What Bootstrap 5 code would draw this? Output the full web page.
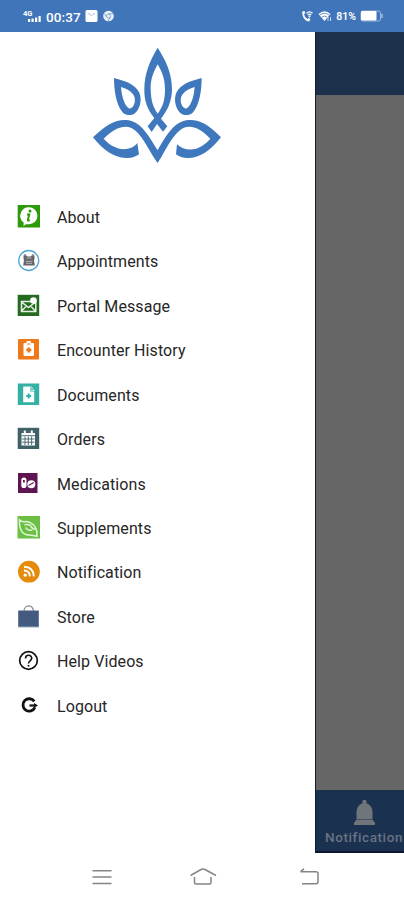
<!DOCTYPE html>
<html lang="en">
<head>
<meta charset="utf-8">
<meta name="viewport" content="width=device-width, initial-scale=1">
<title>Patient portal menu</title>
<link href="https://cdn.jsdelivr.net/npm/bootstrap@5.3.0/dist/css/bootstrap.min.css" rel="stylesheet">
<style>
body{font-family:Roboto,"Liberation Sans",sans-serif;background:#fff;overflow:hidden}
.phone{width:404px;height:900px}
.status{height:32px;background:#4175b9;color:#fff;padding:0 21px 0 23px}
.clock{font-size:13.5px;font-weight:500;letter-spacing:.1px;line-height:32px;margin-left:3px;padding-top:1px}
.batt{font-size:10.5px;font-weight:600;line-height:32px;padding-top:1px;margin-left:4px}
.stage{height:821px}
.drawer{width:315px;padding-top:8px}
.emblem{margin-left:84px;height:130px}
.menu{margin-top:24.8px}
.menu a{height:44.43px;padding-left:17px;color:#262626;font-size:16px;letter-spacing:.09px;line-height:20px}
.menu a span{padding-top:2px}
.menu svg{width:24px;height:24px;margin-right:16px;overflow:visible}
.behind{background:#666;border-left:1px solid #101c30}
.topbar{height:63px;background:#1c304b}
.tab{height:63px;background:#1b3150;color:#697382;border-bottom:2px solid #0b1730}
.tab span{font-size:13.5px;letter-spacing:.6px;line-height:16px;font-weight:500;margin:auto 0 6px 9px;white-space:nowrap}
.tab svg{margin:9px 0 0 36px}
.sysnav{height:47px}
</style>
</head>
<body>
<div class="phone d-flex flex-column overflow-hidden">
  <header class="status d-flex align-items-center justify-content-between">
    <div class="d-flex align-items-center">
      <svg width="20" height="14" viewBox="0 0 20 14" fill="#fff"><text x="0" y="7" font-size="7.500" font-weight="700">4G</text><path d="M5 10h2.200v3H5zM8.500 9.500h2.200V13H8.500zM12 8.500h2.200V13H12zM15.500 7h2.200v6h-2.200z"/></svg>
      <span class="clock">00:37</span>
      <svg class="ms-1" width="13" height="12" viewBox="0 0 13 12"><rect x=".5" width="12" height="12" rx="1.500" fill="#fff"/><path d="M3 3l3.500 2.500L10 3" fill="none" stroke="#a8c0df"/></svg>
      <svg class="ms-1" width="12" height="12" viewBox="0 0 12 12"><circle cx="6.500" cy="6" r="5.300" fill="#e9f0f8"/><circle cx="6.500" cy="6" r="2" fill="none" stroke="#8eaed6"/><path d="M6.500 3.800h4.500M4.500 7L2.500 3.700M8.300 7.200L6 11" stroke="#6b94c8" stroke-width=".8"/></svg>
    </div>
    <div class="d-flex align-items-center">
      <svg width="13" height="12" viewBox="0 0 13 12" fill="none" stroke="#fff"><path d="M2.500 1.500C1 5 4 10.500 8.500 10.500" stroke-width="1.800"/><path d="M2.300 1.500l1 2.300M8.500 10.500L7 8.500" stroke-width="2.400"/><path d="M5.500 3.200q3-2.800 6 0M6.800 5q1.700-1.500 3.400 0" stroke-width="1.200"/><circle cx="8.500" cy="6.500" r=".6" fill="#fff"/></svg>
      <svg class="ms-1" width="14" height="12" viewBox="0 0 14 12"><path d="M.5 4Q6.500-1.500 12.500 4L6.500 11z" fill="#fff"/><path d="M2 5q4.500-3.500 9 0M4 7q2.500-2 5 0" fill="none" stroke="#4175b9" stroke-width=".8"/><path d="M10 11V7m2.500 0v4" stroke="#c8d7eb"/></svg>
      <span class="batt">81%</span>
      <svg class="ms-1" width="23" height="12" viewBox="0 0 23 12"><rect x="1" y="1" width="19.500" height="10" rx="2" fill="none" stroke="#9ab7dc"/><rect x="1" y="1" width="15.500" height="9.500" rx="1" fill="#fff"/><path d="M22 4v4" stroke="#b9cde7" stroke-width="1.200"/></svg>
    </div>
  </header>

  <main class="stage d-flex">
    <aside class="drawer flex-shrink-0 bg-white">
      <div class="emblem">
        <svg class="d-block" width="146" height="130" viewBox="0 0 438 390" fill="#3f78bd" fill-rule="evenodd">
          <path d="M221 23C247 64 263 99 264 146C264 184 250 211 231 236L250 259L237 275L219 252L203 276L191 259L211 234C190 207 180 182 181 146C182 99 197 63 221 23ZM221 73C207 99 199 120 200 149C201 181 207 200 221 221C236 200 243 181 243 149C243 120 236 99 221 73Z"/>
          <path d="M90 114C126 123 153 133 166 158C175 179 168 208 151 221C143 227 125 226 117 218C96 196 90 149 90 114ZM111 141C113 166 119 190 131 202C136 208 143 206 148 198C155 187 154 172 147 163C139 152 126 145 111 141Z"/>
          <path d="M353 114C317 123 290 133 277 158C268 179 275 208 292 221C300 227 318 226 326 218C347 196 353 149 353 114ZM332 141C330 166 324 190 312 202C307 208 300 206 295 198C288 187 289 172 296 163C304 152 317 145 332 141Z"/>
          <path d="M27 292C65 256 91 239 126 240C173 243 196 292 221 331C244 292 268 243 315 240C350 239 376 256 411 292C381 330 350 353 316 354C300 355 285 351 276 343L279 313C297 332 328 332 347 322C360 315 370 306 379 296C359 275 340 261 315 260C273 260 247 331 221 369C193 330 166 260 126 260C100 261 80 275 59 296C69 307 80 316 94 322C115 332 145 329 160 309L165 343C154 351 142 355 126 354C89 353 57 330 27 292Z"/>
        </svg>
      </div>
      <nav class="menu d-flex flex-column">
        <a href="#" class="d-flex align-items-center text-decoration-none">
          <svg viewBox="0 0 24 24"><rect x=".7" y="0" width="22.300" height="22.500" fill="#2d9a08"/><path d="M12 2.200a8.500 8.500 0 0 1 0 17q-2 0-3 0L6.500 21l.2-3.500A8.500 8.500 0 0 1 12 2.200z" fill="#fff"/><circle cx="13" cy="6" r="1.500" fill="#2d9a08"/><path d="M10 9.500h2.300L10.800 15q0 1.200 2 0" fill="none" stroke="#2d9a08" stroke-width="1.900"/></svg><span>About</span></a>
        <a href="#" class="d-flex align-items-center text-decoration-none">
          <svg viewBox="0 0 24 24"><circle cx="11.700" cy="11.500" r="10" fill="#fff" stroke="#51a5d0" stroke-width="1.300"/><path d="M6.500 6.500h3l1 1h3l1-1h3v3.500l-.5 1 .8 5.500H6.200L7 11l-.5-1z" fill="#66646b"/><path d="M9.500 9h5M8.500 12.300h7M9 14.300h6" stroke="#c9c7cb" stroke-width=".8"/><path d="M8 7V5M16 7V5" stroke="#555"/></svg><span>Appointments</span></a>
        <a href="#" class="d-flex align-items-center text-decoration-none">
          <svg viewBox="0 0 24 24"><rect x=".7" y=".8" width="21.500" height="21.200" fill="#246b20"/><path d="M4.500 7.500h14.300v10H4.500zM4.500 8l7 5.500 7-5.500M4.500 17l5-5M18.500 17l-5-5" fill="none" stroke="#e4f0e2" stroke-width="1.500"/><circle cx="16.500" cy="6.500" r="3.300" fill="#fff"/></svg><span>Portal Message</span></a>
        <a href="#" class="d-flex align-items-center text-decoration-none">
          <svg viewBox="0 0 24 24"><rect x="1" y="1" width="21" height="20.500" rx=".8" fill="#ef7918"/><rect x="6.500" y="5" width="10.500" height="13" rx="1" fill="#fff"/><rect x="9.500" y="3" width="4.500" height="4" rx="1" fill="#fff"/><path d="M10 6h3.500" stroke="#ef7918"/><path d="M11.800 9.500v5M9.300 12h5" stroke="#ef7918" stroke-width="2.400"/></svg><span>Encounter History</span></a>
        <a href="#" class="d-flex align-items-center text-decoration-none">
          <svg viewBox="0 0 24 24"><rect x=".8" y=".5" width="21.400" height="21.500" fill="#35b0a5"/><path d="M6.200 3.500h7v5h4v10.700H6.200z" fill="#fff"/><path d="M14 3.500l3.300 4H14z" fill="#35b0a5" stroke="#d8f1ee" stroke-width=".8"/><path d="M11.700 10.500v5M9.200 13h5" stroke="#35b0a5" stroke-width="2"/></svg><span>Documents</span></a>
        <a href="#" class="d-flex align-items-center text-decoration-none">
          <svg viewBox="0 0 24 24"><rect x=".7" y=".8" width="21.500" height="21.200" fill="#416169"/><path d="M4.500 6h13.500v12.500H4.500zM6.800 3.500h2V7h-2zM13.800 3.500h2V7h-2z" fill="#fff"/><path d="M4.500 8.700H18M5 12h12.500M5 15.200h12.500M8 9.500V18M11.300 9.500V18M14.600 9.500V18" stroke="#416169" stroke-width=".9"/></svg><span>Orders</span></a>
        <a href="#" class="d-flex align-items-center text-decoration-none">
          <svg viewBox="0 0 24 24"><rect x="1" y="1" width="19.500" height="20" fill="#601553"/><rect x="4.300" y="5.500" width="5.200" height="10.500" rx="2.600" fill="#fff"/><path d="M6 8h1.800v2.500H6z" fill="#601553"/><circle cx="14.300" cy="12.200" r="4" fill="#fff"/><path d="M11.500 13.500l5.300-3" stroke="#601553" stroke-width="1.100"/></svg><span>Medications</span></a>
        <a href="#" class="d-flex align-items-center text-decoration-none">
          <svg viewBox="0 0 24 24"><rect x=".5" y="0" width="22.500" height="22.500" fill="#6cbf45"/><path d="M2.500 4C2 13 5 19 12 19q4 .5 8 1.200Q20.500 12 16 8.500 12 5 8 5.700 4 6 2.500 4zM7.500 8.800q6-1 7 2.700l3.500 2M8.500 11.500q2 3.500 7 2.500" fill="none" stroke="#e0f5d5" stroke-width="1.500"/></svg><span>Supplements</span></a>
        <a href="#" class="d-flex align-items-center text-decoration-none">
          <svg viewBox="0 0 24 24"><circle cx="11.900" cy="11.700" r="10.900" fill="#e58b0b"/><g fill="none" stroke="#fff" stroke-width="2"><path d="M7 6.700q9.300 0 9.800 9.700M7 10.500q5.500 0 6 5.900"/></g><circle cx="8.200" cy="15.200" r="1.600" fill="#fff"/></svg><span>Notification</span></a>
        <a href="#" class="d-flex align-items-center text-decoration-none">
          <svg viewBox="0 0 24 24"><path d="M7 6.500C7-1 16-1 16.500 6.500" fill="none" stroke="#858585" stroke-width="1.100"/><path d="M1.200 5.500h20.600V22H1.200z" fill="#435b80"/><path d="M1 22h21" stroke="#9da9ba"/></svg><span>Store</span></a>
        <a href="#" class="d-flex align-items-center text-decoration-none">
          <svg viewBox="0 0 24 24" fill="none" stroke="#111"><circle cx="11.500" cy="11.500" r="8.800" stroke-width="1.700"/><path d="M8.500 9.500C8.500 5.300 14.700 5.300 14.700 9.300c0 2.400-3.200 2.600-3.200 5.200" stroke-width="1.600"/><path d="M11.500 15.900v1.700" stroke-width="1.700"/></svg><span>Help Videos</span></a>
        <a href="#" class="d-flex align-items-center text-decoration-none">
          <svg viewBox="0 0 24 24" fill="none" stroke="#111"><path d="M17.300 7.400a6.200 6.200 0 1 0 .6 6" stroke-width="2.800"/><path d="M12.500 11.500h5" stroke-width="2.200"/><path d="M17 9l4 2.500-4 2.200z" fill="#111" stroke="none"/></svg><span>Logout</span></a>
      </nav>
    </aside>
    <section class="behind flex-grow-1 d-flex flex-column justify-content-between overflow-hidden">
      <div class="topbar"></div>
      <div class="tab d-flex flex-column">
        <svg class="flex-shrink-0" width="25" height="28" viewBox="0 0 25 28" fill="#70757c"><circle cx="12.500" cy="3" r="2.200"/><path d="M4.500 20V13c0-5 3.500-9 8-9s8 4 8 9v7z"/><path d="M4.500 20.500h16l2.500 3.500q.8 2-1.500 2h-18q-2.300 0-1.500-2z"/></svg>
        <span>Notification</span>
      </div>
    </section>
  </main>

  <footer class="sysnav d-flex align-items-center">
    <svg width="404" height="47" viewBox="0 0 404 47" fill="none" stroke="#858585" stroke-width="1.500">
      <path d="M92.500 17.800h19M92.500 24h19M92.500 30.500h19"/>
      <path d="M190.500 22.500L201 16.500q2-.9 4 0l11 6M194.500 24v5.500q0 1.500 1.500 1.500h13.500q1.500 0 1.500-1.500V24"/>
      <path d="M300.500 18.700H316q2 0 2 2v8q0 2-2 2h-14M304 15.800l-3.500 2.900"/>
    </svg>
  </footer>
</div>
<script src="https://cdn.jsdelivr.net/npm/bootstrap@5.3.0/dist/js/bootstrap.bundle.min.js"></script>
</body>
</html>
